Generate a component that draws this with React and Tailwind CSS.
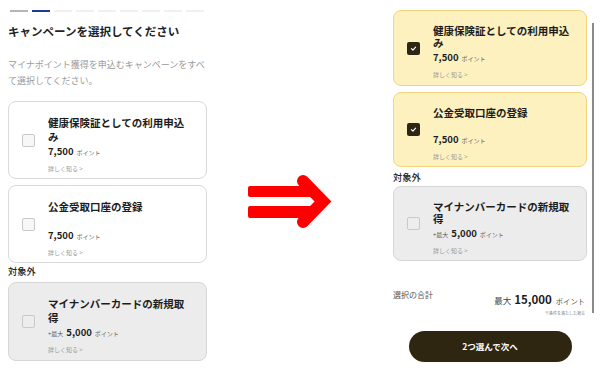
import React from 'react';

const Checkbox = ({ checked, variant }) => {
  if (checked) {
    return (
      <div className="w-[13px] h-[13px] shrink-0 rounded-[2px] bg-[#2e2614] flex items-center justify-center">
        <svg width="7" height="7" viewBox="0 0 10 10" fill="none">
          <path d="M2 5.2 L4.2 7.3 L8 3" stroke="#ffffff" strokeWidth="1.6" strokeLinecap="round" strokeLinejoin="round" />
        </svg>
      </div>
    );
  }
  return (
    <div
      className={`w-[13px] h-[13px] shrink-0 rounded-[2px] border border-[#c9c9c9] ${
        variant === 'gray' ? 'bg-[#ededed]' : 'bg-[#f7f7f7]'
      }`}
    />
  );
};

// キャンペーンカード
const Card = ({ title, points, max, variant = 'white', checked, compact, height }) => {
  const box =
    variant === 'yellow'
      ? 'bg-[#fdf1bf] border-[#f4d57c]'
      : variant === 'gray'
      ? 'bg-[#ececec] border-[#d6d6d6]'
      : 'bg-white border-[#d9d9d9]';

  return (
    <div className={`flex items-center rounded-[8px] border pl-[13px] pr-[14px] ${box} ${height}`}>
      <Checkbox checked={checked} variant={variant} />
      <div className="ml-[13px] self-stretch pt-[14px] flex-1">
        <div
          className={`text-[10.5px] font-bold text-[#1c1c1c] ${
            compact ? 'leading-[12px] min-h-[24px]' : 'leading-[13.5px] min-h-[27px]'
          }`}
        >
          {title}
        </div>
        <div className="mt-[2px] leading-[12px] flex items-baseline text-[#1c1c1c]">
          {max && <span className="text-[6px] text-[#555] mr-[3px]">+最大</span>}
          <span className="text-[9.5px] font-bold">{points}</span>
          <span className="text-[6px] text-[#666] ml-[3px]">ポイント</span>
        </div>
        <div className="mt-[5px] leading-[10px] text-[6px] text-[#9a9a9a]">詳しく知る &gt;</div>
      </div>
    </div>
  );
};

const Arrow = () => (
  <svg width="92" height="60" viewBox="0 0 92 60" className="ml-[30px] mt-[172px]">
    <rect x="3" y="14" width="68" height="11" rx="2" fill="#ff0000" />
    <rect x="3" y="34" width="68" height="12" rx="2" fill="#ff0000" />
    <polyline
      points="58,9 78,29.5 58,50"
      fill="none"
      stroke="#ff0000"
      strokeWidth="12"
      strokeLinejoin="miter"
      strokeLinecap="round"
    />
  </svg>
);

const App = () => {
  const segments = [0, 1, 2, 3, 4, 5, 6, 7, 8];

  return (
    <div className="w-[600px] h-[370px] bg-white flex overflow-hidden font-['Noto_Sans_CJK_JP','Noto_Sans',sans-serif]">
      {/* 選択前 */}
      <div className="w-[215px] shrink-0 pl-[8px] pt-[10px]">
        <div className="flex gap-[4px] ml-[2px]">
          {segments.map((i) => (
            <div
              key={i}
              className={`w-[18px] h-[2px] ${
                i === 0 ? 'bg-[#b5b5b5]' : i === 1 ? 'bg-[#213a8f]' : 'bg-[#f0f0f0]'
              }`}
            />
          ))}
        </div>
        <h1 className="mt-[11px] text-[11.5px] leading-[16px] font-bold text-[#222]">
          キャンペーンを選択してください
        </h1>
        <p className="mt-[18px] w-[200px] text-[9px] leading-[16px] text-[#9b9b9b]">
          マイナポイント獲得を申込むキャンペーンをすべて選択してください。
        </p>
        <div className="w-[199px] mt-[12px] flex flex-col gap-[6px]">
          <Card title="健康保険証としての利用申込み" points="7,500" height="h-[78px]" />
          <Card title="公金受取口座の登録" points="7,500" height="h-[78px]" />
        </div>
        <div className="mt-[2px] text-[9.3px] leading-[12px] font-medium text-[#222]">対象外</div>
        <div className="w-[199px] mt-[5px]">
          <Card title="マイナンバーカードの新規取得" points="5,000" max variant="gray" height="h-[79px]" />
        </div>
      </div>

      {/* 矢印 */}
      <div className="w-[170px] shrink-0">
        <Arrow />
      </div>

      {/* 選択後 */}
      <div className="w-[215px] shrink-0 pl-[8px] pt-[10px] flex">
        <div className="w-[194px] shrink-0">
          <div className="flex flex-col gap-[6px]">
            <Card title="健康保険証としての利用申込み" points="7,500" variant="yellow" checked compact height="h-[76px]" />
            <Card title="公金受取口座の登録" points="7,500" variant="yellow" checked compact height="h-[75px]" />
          </div>
          <div className="mt-[4px] text-[9.3px] leading-[12px] font-medium text-[#222]">対象外</div>
          <div className="mt-[3px]">
            <Card title="マイナンバーカードの新規取得" points="5,000" max variant="gray" compact height="h-[75px]" />
          </div>
          <div className="mt-[29px] flex justify-between items-start">
            <span className="text-[8px] leading-[10px] text-[#555]">選択の合計</span>
            <div className="pt-[2px] pr-[2px] flex flex-col items-end">
              <div className="leading-[14px] flex items-baseline text-[#1c1c1c]">
                <span className="text-[8.5px] text-[#444] mr-[3px]">最大</span>
                <span className="text-[11.5px] font-bold">15,000</span>
                <span className="text-[7.3px] text-[#555] ml-[4px]">ポイント</span>
              </div>
              <div className="mt-[2px] text-[4px] leading-[6px] text-[#777]">※条件を満たした場合</div>
            </div>
          </div>
          <button className="mt-[15px] mx-auto flex items-center justify-center w-[163px] h-[31px] rounded-full bg-[#2f2611] text-white text-[8.5px] font-bold">
            2つ選んで次へ
          </button>
        </div>
        <div className="ml-[5px] mt-[13px] w-[2px] h-[290px] bg-[#8a8a8a]" />
      </div>
    </div>
  );
};

export default App;
